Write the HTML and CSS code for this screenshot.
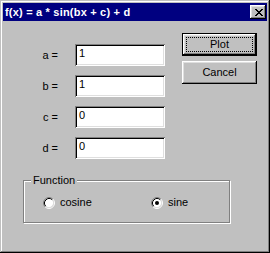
FILE: index.html
```html
<!DOCTYPE html>
<html lang="en">
<head>
  <meta charset="UTF-8" />
  <title>f(x) = a * sin(bx + c) + d</title>
  <link rel="stylesheet" href="styles.css">
</head>
<body>

<div class="window">
  <div class="titlebar">
    <span class="title">f(x) = a * sin(bx + c) + d</span>
    <button class="close" title="Close">
      <svg width="8" height="7" viewBox="0 0 8 7" shape-rendering="crispEdges">
        <path d="M0 0h2v1h-2z M6 0h2v1h-2z M1 1h2v1h-2z M5 1h2v1h-2z M2 2h4v1h-4z M3 3h2v1h-2z M2 4h4v1h-4z M1 5h2v1h-2z M5 5h2v1h-2z M0 6h2v1h-2z M6 6h2v1h-2z" fill="#000"/>
      </svg>
    </button>
  </div>

  <div class="content">
    <div class="top">
      <div class="form">
        <span class="label">a =</span><div class="field">1</div>
        <span class="label">b =</span><div class="field">1</div>
        <span class="label">c =</span><div class="field">0</div>
        <span class="label">d =</span><div class="field">0</div>
      </div>
      <div class="actions">
        <button class="btn default"><span class="focus">Plot</span></button>
        <button class="btn">Cancel</button>
      </div>
    </div>

    <fieldset class="group">
      <legend>Function</legend>
      <div class="options">
        <label class="option">
          <svg class="radio" width="12" height="12" viewBox="0 0 12 12">
            <circle cx="6" cy="6" r="4.5" fill="#fff"/>
            <path d="M2.11 9.89 A5.5 5.5 0 0 1 9.89 2.11" fill="none" stroke="#808080"/>
            <path d="M9.89 2.11 A5.5 5.5 0 0 1 2.11 9.89" fill="none" stroke="#fff"/>
            <path d="M2.82 9.18 A4.5 4.5 0 0 1 9.18 2.82" fill="none" stroke="#000"/>
            <path d="M9.18 2.82 A4.5 4.5 0 0 1 2.82 9.18" fill="none" stroke="#dfdfdf"/>
          </svg>
          cosine
        </label>
        <label class="option">
          <svg class="radio" width="12" height="12" viewBox="0 0 12 12">
            <circle cx="6" cy="6" r="4.5" fill="#fff"/>
            <path d="M2.11 9.89 A5.5 5.5 0 0 1 9.89 2.11" fill="none" stroke="#808080"/>
            <path d="M9.89 2.11 A5.5 5.5 0 0 1 2.11 9.89" fill="none" stroke="#fff"/>
            <path d="M2.82 9.18 A4.5 4.5 0 0 1 9.18 2.82" fill="none" stroke="#000"/>
            <path d="M9.18 2.82 A4.5 4.5 0 0 1 2.82 9.18" fill="none" stroke="#dfdfdf"/>
            <circle cx="6" cy="6" r="2" fill="#000"/>
          </svg>
          sine
        </label>
      </div>
    </fieldset>
  </div>
</div>

</body>
</html>
```

FILE: styles.css
```css
html, body {
  margin: 0;
  background: #c0c0c0;
}
body {
  font-family: "Liberation Sans", Arial, sans-serif;
  font-size: 11px;
  line-height: 13px;
  color: #000;
}
.window {
  width: 270px;
  height: 253px;
  box-sizing: border-box;
  padding: 3px;
  background: #c0c0c0;
  box-shadow: inset -1px -1px #000, inset 1px 1px #c0c0c0,
              inset -2px -2px #808080, inset 2px 2px #fff;
  display: flex;
  flex-direction: column;
}
.titlebar {
  height: 18px;
  background: #000080;
  color: #fff;
  display: flex;
  align-items: center;
  justify-content: space-between;
  padding-left: 2px;
}
.title {
  font-weight: bold;
  font-size: 11px;
  letter-spacing: 0.2px;
}
.close {
  width: 16px;
  height: 14px;
  margin-right: 1px;
  padding: 0;
  border: none;
  background: #c0c0c0;
  box-shadow: inset -1px -1px #000, inset 1px 1px #fff,
              inset -2px -2px #808080, inset 2px 2px #dfdfdf;
  display: flex;
  align-items: center;
  justify-content: center;
}
.close svg {
  display: block;
  margin-left: 1px;
}
.top {
  display: flex;
  align-items: flex-start;
}
.form {
  display: grid;
  grid-template-columns: 55px 90px;
  grid-auto-rows: 22px;
  column-gap: 17px;
  row-gap: 9px;
  margin-top: 23px;
  align-items: center;
}
.label {
  text-align: right;
}
.field {
  height: 22px;
  box-sizing: border-box;
  padding: 3px 4px;
  background: #fff;
  color: #000;
  box-shadow: inset 1px 1px #808080, inset -1px -1px #fff,
              inset 2px 2px #000, inset -2px -2px #dfdfdf;
}
.actions {
  display: flex;
  flex-direction: column;
  gap: 5px;
  margin-top: 12px;
  margin-left: 17px;
}
.btn {
  width: 75px;
  height: 23px;
  padding: 0;
  border: none;
  background: #c0c0c0;
  font: inherit;
  color: #000;
  box-shadow: inset -1px -1px #000, inset 1px 1px #fff,
              inset -2px -2px #808080, inset 2px 2px #dfdfdf;
}
.btn.default {
  border: 1px solid #000;
  padding: 3px;
  display: flex;
}
.focus {
  flex: 1;
  border: 1px dotted #000;
  display: flex;
  align-items: center;
  justify-content: center;
}
.group {
  margin: 15px 0 0 20px;
  width: 207px;
  box-sizing: border-box;
  padding: 9px 0 13px 7px;
  border: 1px solid #808080;
  box-shadow: 1px 1px 0 #fff, inset 1px 1px 0 #fff;
  min-width: 0;
}
.group legend {
  padding: 0 2px;
  background: #c0c0c0;
  line-height: 13px;
}
.options {
  display: grid;
  grid-template-columns: 108px 80px;
  margin-left: 12px;
}
.option {
  display: flex;
  align-items: center;
  gap: 5px;
  height: 13px;
}
.radio {
  display: block;
  flex: none;
}
```
